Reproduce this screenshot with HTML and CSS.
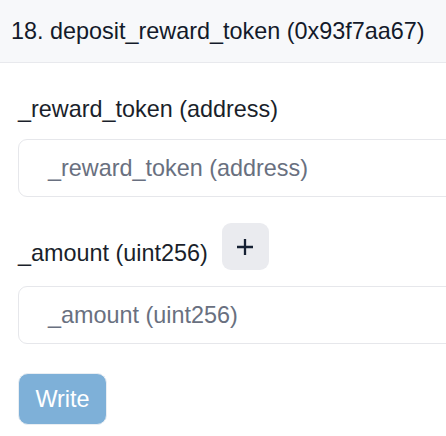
FILE: index.html
```html
<!DOCTYPE html>
<html>
<head>
<meta charset="utf-8">
<link rel="stylesheet" href="styles.css">
</head>
<body>
<div class="header">18. deposit_reward_token (0x93f7aa67)</div>
<div class="content">
  <div class="field first">
    <div class="label-row"><span class="label">_reward_token (address)</span></div>
    <div class="input"><span class="placeholder">_reward_token (address)</span></div>
  </div>
  <div class="field">
    <div class="label-row"><span class="label">_amount (uint256)</span>
      <span class="plus"><svg width="16" height="16" viewBox="0 0 16 16"><path d="M8 0v16M0 8h16" stroke="#152033" stroke-width="2.3" fill="none"/></svg></span>
    </div>
    <div class="input"><span class="placeholder">_amount (uint256)</span></div>
  </div>
  <div class="write">Write</div>
</div>
</body>
</html>
```
FILE: styles.css
```css
html, body { margin: 0; padding: 0; background: #fff; }
body { font-family: "Liberation Sans", Arial, sans-serif; color: #111827; width: 446px; height: 436px; overflow: hidden; }
.header {
  height: 63px;
  box-sizing: border-box;
  background: #f7f8fa;
  border-bottom: 1.5px solid #e8e9ed;
  padding: 0 11px 1px;
  display: flex;
  align-items: center;
  font-size: 23.4px;
  line-height: 26px;
  color: #131a2a;
}
.content { padding: 33px 0 0 18px; overflow: hidden; }
.field { display: flex; flex-direction: column; }
.label-row { display: flex; align-items: flex-end; gap: 14px; margin-bottom: 16px; }
.label { font-size: 23.4px; line-height: 26px; color: #1a1f2b; margin-bottom: 4px; }
.first .label-row { margin-bottom: 17px; }
.first .label { margin-bottom: 0; }
.input {
  width: 470px;
  height: 58px;
  box-sizing: border-box;
  border: 1.5px solid #e6e7eb;
  border-radius: 9px;
  padding-left: 29px;
  display: flex;
  align-items: center;
  font-size: 23.4px;
  color: #697080;
  margin-bottom: 26px;
}
.plus {
  width: 47px; height: 47px;
  background: #eaebef;
  border-radius: 9px;
  display: flex; align-items: center; justify-content: center;
}
.write {
  display: inline-flex;
  align-items: center;
  justify-content: center;
  width: 89px;
  height: 52px;
  box-sizing: border-box;
  background: #7eb0d8;
  border: 1.5px solid #e9eef3;
  border-radius: 10px;
  color: #fff;
  font-size: 23.4px;
  margin-top: 3px;
}
```
